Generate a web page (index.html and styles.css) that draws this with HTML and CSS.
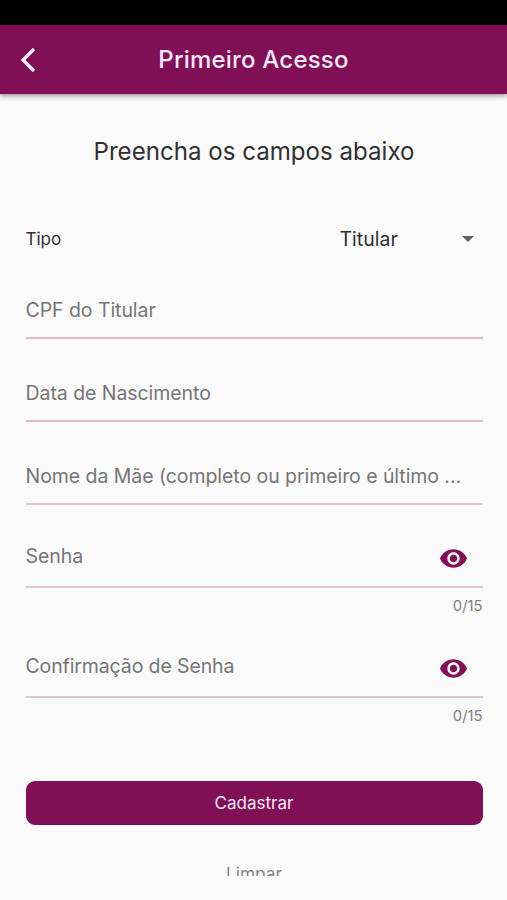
FILE: index.html
```html
<!DOCTYPE html>
<html lang="pt-BR">
<head>
<meta charset="utf-8">
<meta name="viewport" content="width=device-width, initial-scale=1">
<title>Primeiro Acesso</title>
<link rel="stylesheet" href="styles.css">
</head>
<body>
<div class="status-bar"></div>
<header class="app-bar">
  <svg class="back" viewBox="0 0 16 26" aria-hidden="true"><path d="M14 2 3 13 14 24"/></svg>
  <h1 class="title">Primeiro Acesso</h1>
</header>
<main class="content">
  <h2 class="heading">Preencha os campos abaixo</h2>
  <div class="type-row">
    <span class="type-label">Tipo</span>
    <div class="select">
      <span class="select-value">Titular</span>
      <svg class="caret" viewBox="0 0 12 6" aria-hidden="true"><path d="M0 0h12L6 6z"/></svg>
    </div>
  </div>
  <form class="form">
    <div class="field thin"><span class="hint">CPF do Titular</span></div>
    <div class="field thin"><span class="hint">Data de Nascimento</span></div>
    <div class="field"><span class="hint">Nome da Mãe (completo ou primeiro e último ...</span></div>
    <div class="field password">
      <span class="hint">Senha</span>
      <svg class="eye" viewBox="1 4.5 22 15" aria-hidden="true"><path d="M12 4.5C7 4.5 2.73 7.61 1 12c1.73 4.39 6 7.5 11 7.5s9.27-3.11 11-7.5c-1.73-4.39-6-7.5-11-7.5zM12 17c-2.76 0-5-2.24-5-5s2.24-5 5-5 5 2.24 5 5-2.24 5-5 5zm0-8c-1.66 0-3 1.34-3 3s1.34 3 3 3 3-1.34 3-3-1.34-3-3-3z"/></svg>
    </div>
    <div class="counter"><span>0/15</span></div>
    <div class="field password">
      <span class="hint confirm">Confirmação de Senha</span>
      <svg class="eye" viewBox="1 4.5 22 15" aria-hidden="true"><path d="M12 4.5C7 4.5 2.73 7.61 1 12c1.73 4.39 6 7.5 11 7.5s9.27-3.11 11-7.5c-1.73-4.39-6-7.5-11-7.5zM12 17c-2.76 0-5-2.24-5-5s2.24-5 5-5 5 2.24 5 5-2.24 5-5 5zm0-8c-1.66 0-3 1.34-3 3s1.34 3 3 3 3-1.34 3-3-1.34-3-3-3z"/></svg>
    </div>
    <div class="counter"><span>0/15</span></div>
    <button class="submit" type="button">Cadastrar</button>
    <button class="clear" type="button">Limpar</button>
  </form>
</main>
</body>
</html>
```
FILE: styles.css
```css
* { box-sizing: border-box; }

body {
  margin: 0;
  height: 900px;
  overflow: hidden;
  background: #fafafa;
  color: #303030;
  font-family: Inter, Roboto, "Liberation Sans", sans-serif;
}

.status-bar { height: 25px; background: #000; }

.app-bar {
  display: grid;
  grid-template-columns: 54px 1fr 54px;
  align-items: center;
  height: 69px;
  background: #800f56;
  color: #ffeafa;
  box-shadow: 0 2px 5px rgba(0, 0, 0, .4);
}

.back {
  width: 16px;
  height: 26px;
  margin-left: 20px;
  fill: none;
  stroke: #fff3fc;
  stroke-width: 3.2;
}

.title {
  margin: 0;
  font-size: 24px;
  font-weight: 500;
  letter-spacing: .2px;
  line-height: 30px;
  text-align: center;
  white-space: nowrap;
}

.content {
  height: 782px;
  padding: 43px 24.5px 0 25.5px;
  overflow: hidden;
}

.heading {
  margin: 0;
  font-size: 24.1px;
  font-weight: 400;
  line-height: 30px;
  text-align: center;
  white-space: nowrap;
}

.type-row {
  display: flex;
  align-items: center;
  justify-content: space-between;
  height: 60px;
  margin-top: 42px;
}

.type-label { font-size: 17px; }

.select {
  display: flex;
  align-items: center;
  justify-content: space-between;
  width: 143px;
  padding-right: 9px;
  font-size: 19.5px;
}

.caret { width: 12px; height: 6px; fill: #606060; }

.form { margin-top: -13px; }

.field {
  display: flex;
  align-items: flex-start;
  justify-content: space-between;
  height: 83px;
  padding-top: 41.5px;
  border-bottom: 2px solid #dfc7d1;
}

.field.thin { border-bottom-color: #dcbccb; }

.field.password { padding-top: 38.5px; }

.hint {
  color: #757575;
  font-size: 19.5px;
  letter-spacing: -.06px;
  line-height: 24px;
  white-space: nowrap;
}

.hint.confirm { letter-spacing: -.12px; }

.eye {
  width: 27px;
  height: 19px;
  margin: 5px 16px 0 0;
  fill: #800f56;
}

.counter {
  height: 27px;
  padding-top: 8px;
  color: #808080;
  font-size: 14.8px;
  line-height: 20px;
  text-align: right;
}

.submit,
.clear {
  display: block;
  width: 100%;
  padding: 0;
  border: 0;
  font-family: inherit;
  font-size: 17px;
}

.submit {
  height: 44px;
  margin-top: 56px;
  border-radius: 9px;
  background: #800f56;
  color: #ffeafa;
}

.clear {
  height: 44px;
  margin-top: 26px;
  background: none;
  color: #858585;
  font-size: 17.3px;
}
```
